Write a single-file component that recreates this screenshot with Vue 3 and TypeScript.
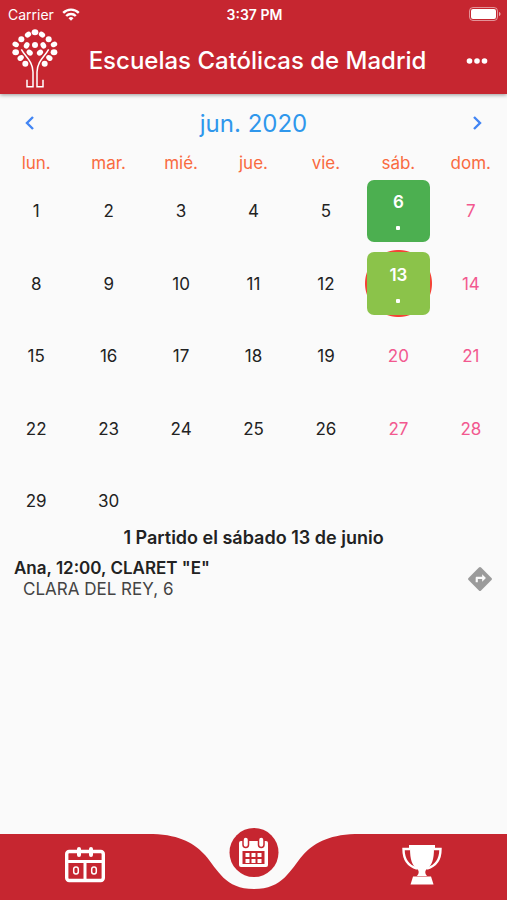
<script setup lang="ts">
import { ref } from 'vue'

interface Match {
  team: string
  time: string
  rival: string
  address: string
}

const weekdays: string[] = ['lun.', 'mar.', 'mié.', 'jue.', 'vie.', 'sáb.', 'dom.']
const days: number[] = Array.from({ length: 30 }, (_, i) => i + 1)
const eventDays: number[] = [6, 13]
const selected = ref<number>(13)
const today = 13

const matches: Match[] = [
  { team: 'Ana', time: '12:00', rival: 'CLARET "E"', address: 'CLARA DEL REY, 6' },
]

// Leaves of the tree logo: centre x, centre y, radius x, radius y, rotation
const logoDots: [number, number, number, number, number][] = [
  [105, 97, 10, 9, 0],
  [84, 104, 10, 8, -35],
  [126, 104, 10, 8, 35],
  [64, 118, 9, 9, 0],
  [146, 118, 9, 9, 0],
  [47, 133, 10, 8, 25],
  [80, 136, 10, 8, -60],
  [105, 135, 9, 9, 0],
  [130, 136, 10, 8, 60],
  [162, 133, 10, 8, -25],
  [47, 157, 10, 9, 0],
  [89, 158, 10, 8, 40],
  [120, 158, 10, 8, -40],
  [162, 157, 10, 9, 0],
  [62, 174, 10, 8, -35],
  [148, 174, 10, 8, 35],
  [76, 191, 9, 9, 0],
  [134, 191, 9, 9, 0],
]

function isWeekend(day: number): boolean {
  return (day - 1) % 7 > 4
}
</script>

<template>
  <div class="screen">
    <header class="header">
      <div class="status">
        <div class="carrier">
          <span>Carrier</span>
          <svg width="18" height="13" viewBox="0 0 18 13" fill="none" stroke="#fff" stroke-width="2.4" aria-hidden="true">
            <path d="M1.2 4.9a11 11 0 0 1 15.6 0" />
            <path d="M4.2 8a6.8 6.8 0 0 1 9.6 0" />
            <path d="M9 12.8 6.5 10.2a3.6 3.6 0 0 1 5 0Z" fill="#fff" stroke="none" />
          </svg>
        </div>
        <span class="clock">3:37 PM</span>
        <svg class="battery" width="32" height="14" viewBox="0 0 32 14" aria-hidden="true">
          <rect x=".5" y=".5" width="28" height="13" rx="3.5" fill="none" stroke="#fff" stroke-opacity=".5" />
          <rect x="2" y="2" width="25" height="10" rx="2" fill="#fff" />
          <path d="M30 5c2 .6 2 3.4 0 4Z" fill="#fff" fill-opacity=".6" />
        </svg>
      </div>
      <div class="appbar">
        <svg class="logo" width="46" height="60" viewBox="36 84 138 180" aria-hidden="true">
          <g fill="#fff">
            <ellipse
              v-for="(d, i) in logoDots"
              :key="i"
              :cx="d[0]"
              :cy="d[1]"
              :rx="d[2]"
              :ry="d[3]"
              :transform="`rotate(${d[4]} ${d[0]} ${d[1]})`"
            />
          </g>
          <g fill="none" stroke="#fff" stroke-width="4.5">
            <path d="M64 148C76 170 98 182 99 216V260H81V239" />
            <path d="M146 148C134 170 112 182 111 216V260H129V239" />
          </g>
        </svg>
        <h1 class="title">Escuelas Católicas de Madrid</h1>
        <button class="more" type="button" aria-label="Más opciones">
          <svg width="22" height="6" viewBox="0 0 22 6" fill="#fff">
            <circle cx="3.5" cy="3" r="2.8" />
            <circle cx="11" cy="3" r="2.8" />
            <circle cx="18.5" cy="3" r="2.8" />
          </svg>
        </button>
      </div>
    </header>

    <main class="content">
      <div class="month">
        <button class="arrow" type="button" aria-label="Mes anterior">
          <svg width="12" height="16" viewBox="0 0 12 16"><path d="M9 2 3 8l6 6" /></svg>
        </button>
        <h2 class="month-name">jun. 2020</h2>
        <button class="arrow" type="button" aria-label="Mes siguiente">
          <svg width="12" height="16" viewBox="0 0 12 16"><path d="m3 2 6 6-6 6" /></svg>
        </button>
      </div>

      <div class="weekdays">
        <span v-for="w in weekdays" :key="w">{{ w }}</span>
      </div>

      <div class="days">
        <div v-for="d in days" :key="d" class="cell" :class="{ today: d === today }">
          <button
            type="button"
            class="day"
            :class="{ weekend: isWeekend(d), event: eventDays.includes(d), selected: d === selected }"
            @click="selected = d"
          >
            <span>{{ d }}</span>
            <i v-if="eventDays.includes(d)" class="dot"></i>
          </button>
        </div>
      </div>

      <section class="matches">
        <h3 class="summary">1 Partido el sábado 13 de junio</h3>
        <article v-for="m in matches" :key="m.time" class="match">
          <div>
            <p class="match-name">{{ m.team }}, {{ m.time }}, {{ m.rival }}</p>
            <p class="match-place">{{ m.address }}</p>
          </div>
          <button class="directions" type="button" aria-label="Cómo llegar">
            <svg width="26" height="26" viewBox="0 0 24 24" fill="#9b9b9b">
              <path
                d="M22.6 11 13 1.400a1.400 1.400 0 0 0-2 0L1.400 11a1.400 1.400 0 0 0 0 2L11 22.600a1.400 1.400 0 0 0 2 0L22.600 13a1.400 1.400 0 0 0 0-2ZM14 14.500V12h-4v3H8v-4c0-.55.450-1 1-1h5V7.500l3.500 3.500-3.500 3.500Z"
              />
            </svg>
          </button>
        </article>
      </section>
    </main>

    <nav class="tabs">
      <a class="tab" href="#resultados" aria-label="Resultados">
        <svg width="40" height="36" viewBox="0 0 40 36" fill="none" stroke="#fff">
          <rect x="1.7" y="4.5" width="36.6" height="29" rx="2.5" stroke-width="3.4" />
          <path d="M2 14.500H38M20 14.500V33" stroke-width="3" />
          <path d="M14 2V8M26 2V8" stroke-width="4" stroke-linecap="round" />
          <rect x="8.700" y="20" width="4.600" height="7" rx="2.200" stroke-width="1.500" />
          <rect x="26.700" y="20" width="4.600" height="7" rx="2.200" stroke-width="1.500" />
        </svg>
      </a>
      <div class="notch">
        <svg class="notch-shape" width="202" height="66" viewBox="0 0 202 66" aria-hidden="true">
          <path d="M0 0C28 1 42 10 52 21C65 36 72 55 101 55S137 36 150 21C160 10 174 1 202 0V66H0Z" fill="#c62630" />
        </svg>
        <a class="tab-current" href="#calendario" aria-label="Calendario" aria-current="page">
          <svg width="30" height="32" viewBox="0 0 30 32">
            <rect x=".5" y="4" width="29" height="26" rx="2" fill="#fff" />
            <rect x="4" y="14" width="22" height="13" fill="#c62630" />
            <g fill="#fff">
              <rect x="7" y="16" width="4" height="4" />
              <rect x="13" y="16" width="4" height="4" />
              <rect x="19" y="16" width="4" height="4" />
              <rect x="7" y="22" width="4" height="4" />
              <rect x="13" y="22" width="4" height="4" />
              <rect x="19" y="22" width="4" height="4" />
            </g>
            <g fill="#fff" stroke="#c62630" stroke-width="1.5">
              <rect x="4.500" y="0" width="5.500" height="10.500" rx="2.700" />
              <rect x="20" y="0" width="5.500" height="10.500" rx="2.700" />
            </g>
          </svg>
        </a>
      </div>
      <a class="tab" href="#trofeos" aria-label="Trofeos">
        <svg width="40" height="40" viewBox="0 0 40 40">
          <path d="M7 0H33V3H32C32 15 30 20 25 24C22.500 26 23 28.500 25 31H15C17 28.500 17.500 26 15 24C10 20 8 15 8 3H7Z" fill="#fff" />
          <path d="M11 31.500H29L31.500 39.500H8.500Z" fill="#fff" />
          <path d="M8 4H1.500C1.500 14 6 21 15 23.500M32 4H38.500C38.500 14 34 21 25 23.500" fill="none" stroke="#fff" stroke-width="2.400" />
        </svg>
      </a>
    </nav>
  </div>
</template>

<style>
body {
  margin: 0;
  background: #fafafa;
}
</style>

<style scoped>
.screen {
  display: flex;
  flex-direction: column;
  min-height: 100vh;
  background: #fafafa;
  color: #222;
  font-family: Inter, Roboto, "Liberation Sans", sans-serif;
}

button {
  padding: 0;
  border: 0;
  background: none;
  color: inherit;
  font: inherit;
  cursor: pointer;
}

h1,
h2,
h3,
p {
  margin: 0;
}

svg {
  display: block;
}

.header {
  background: #c62630;
  color: #fff;
  box-shadow: 0 1px 4px rgba(0, 0, 0, 0.4);
}

.status {
  display: grid;
  grid-template-columns: 1fr auto 1fr;
  align-items: center;
  height: 28px;
  padding: 0 6px 0 8px;
  font-size: 14px;
}

.carrier {
  display: flex;
  align-items: center;
  gap: 8px;
}

.clock {
  font-weight: 600;
}

.battery {
  justify-self: end;
}

.appbar {
  display: grid;
  grid-template-columns: 48px 1fr 44px;
  align-items: center;
  height: 66px;
  padding: 0 8px 0 12px;
}

.logo {
  align-self: start;
}

.title {
  font-size: 24px;
  font-weight: 500;
  line-height: 30px;
  text-align: center;
}

.more {
  display: grid;
  place-items: center;
  height: 44px;
}

.content {
  flex: 1;
}

.month {
  display: flex;
  align-items: center;
  justify-content: space-between;
  height: 58px;
  padding: 0 8px;
}

.month-name {
  color: #2f97ec;
  font-size: 24px;
  font-weight: 400;
}

.arrow {
  display: grid;
  place-items: center;
  width: 44px;
  height: 44px;
}

.arrow path {
  fill: none;
  stroke: #4285f4;
  stroke-width: 2.4;
}

.weekdays,
.days {
  display: grid;
  grid-template-columns: repeat(7, 1fr);
}

.weekdays {
  height: 23px;
  color: #f96a40;
  font-size: 17px;
  line-height: 23px;
  text-align: center;
}

.cell {
  display: grid;
  aspect-ratio: 1;
  box-sizing: border-box;
  padding: 5px;
}

.day {
  display: flex;
  flex-direction: column;
  align-items: center;
  justify-content: center;
  border-radius: 7px;
  font-size: 17px;
  line-height: 20px;
}

.weekend {
  color: #f2588f;
}

.event {
  gap: 14px;
  background: #4caf50;
  color: #fff;
  font-weight: 600;
}

.event.selected {
  background: #8bc34a;
}

.today {
  background: radial-gradient(circle closest-side, #f44336 33px, transparent 34px);
}

.dot {
  width: 4px;
  height: 4px;
  border-radius: 1px;
  background: #fff;
}

.matches {
  margin-top: -10px;
}

.summary {
  font-size: 18px;
  font-weight: 600;
  line-height: 22px;
  text-align: center;
}

.match {
  display: flex;
  align-items: center;
  justify-content: space-between;
  padding: 9px 14px 0;
  font-size: 17px;
  line-height: 21px;
}

.match-name {
  font-weight: 600;
}

.match-place {
  padding-left: 9px;
  color: #444;
}

.tabs {
  display: grid;
  grid-template-columns: 1fr 202px 1fr;
  height: 66px;
}

.tab {
  display: grid;
  place-items: center;
  padding-bottom: 4px;
  background: #c62630;
}

.tab:first-child {
  padding-left: 18px;
}

.tab:last-child {
  padding-right: 18px;
}

.notch {
  position: relative;
}

.tab-current {
  position: absolute;
  top: -6px;
  left: 50%;
  display: grid;
  place-items: center;
  width: 49px;
  height: 49px;
  border-radius: 50%;
  background: #c62630;
  transform: translateX(-50%);
}
</style>
